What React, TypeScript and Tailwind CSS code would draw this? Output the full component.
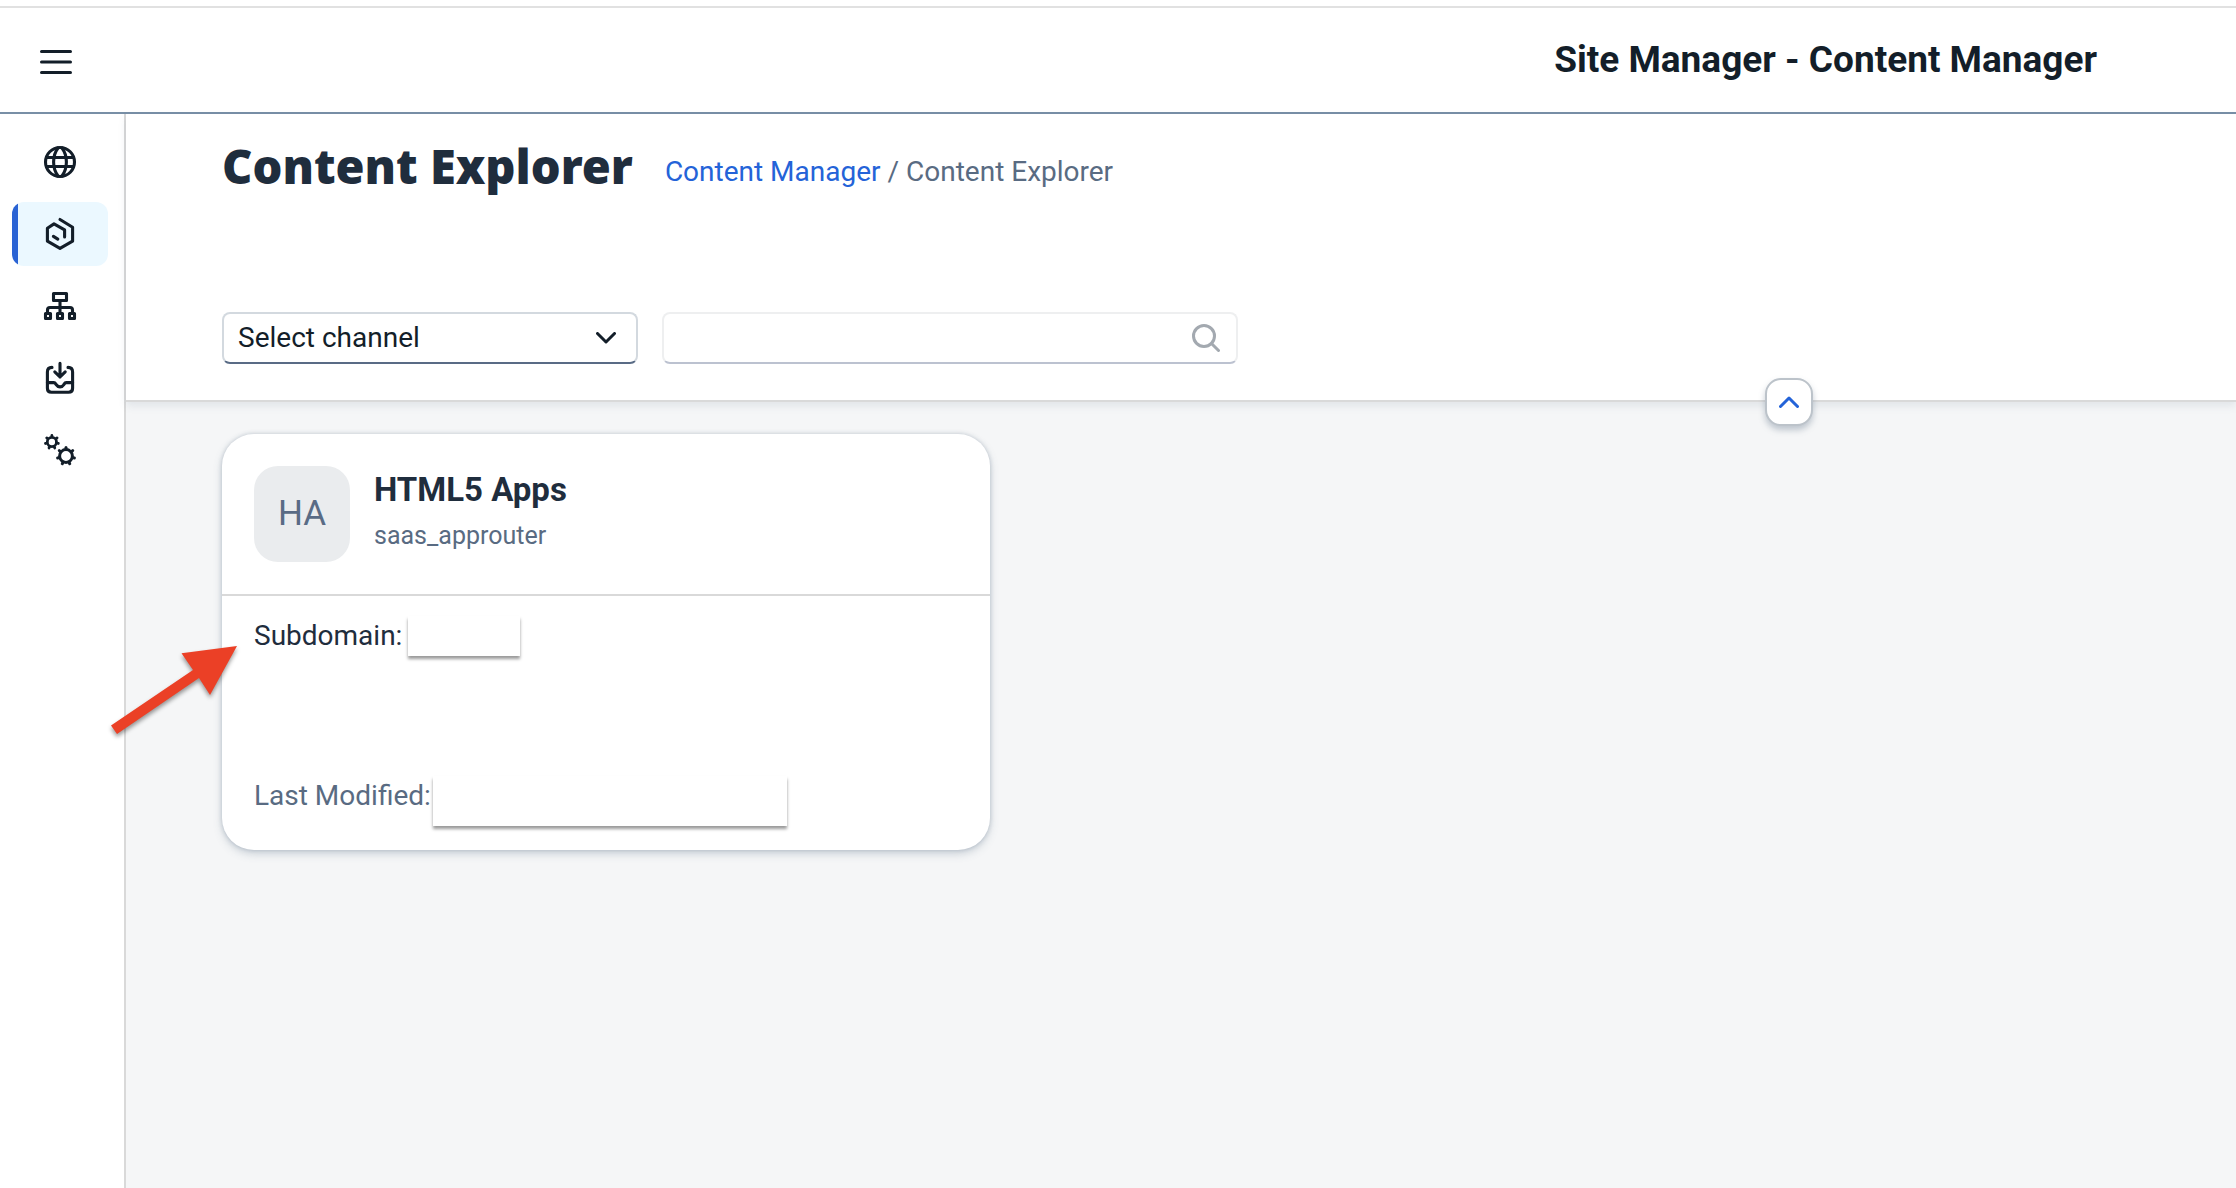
import type { ReactNode } from "react";

const teeth = [0, 1, 2, 3, 4, 5, 6];

function Gear({ cx, cy, ring, tip, width }: { cx: number; cy: number; ring: number; tip: number; width: number }) {
  return (
    <g transform={`translate(${cx} ${cy})`}>
      <circle r={ring} strokeWidth={width} />
      {teeth.map((t) => (
        <path key={t} d={`M0 ${-ring - 1}V${-tip}`} strokeWidth={width} transform={`rotate(${(t * 360) / 7})`} />
      ))}
    </g>
  );
}

function Icon({ children }: { children: ReactNode }) {
  return (
    <svg
      viewBox="0 0 32 32"
      className="size-8 overflow-visible"
      fill="none"
      stroke="currentColor"
      strokeWidth="3.1"
      strokeLinecap="round"
      strokeLinejoin="round"
      aria-hidden="true"
    >
      {children}
    </svg>
  );
}

const navItems: { label: string; active?: boolean; icon: ReactNode }[] = [
  {
    label: "Site Directory",
    icon: (
      <>
        <circle cx="16" cy="16" r="14.5" />
        <path d="M2.5 11.5h27M2.5 20.5h27" />
        <path d="M14 2C11 6 9.6 10.5 9.6 16S11 26 14 30M18 2c3 4 4.4 8.5 4.4 14S21 26 18 30" />
      </>
    ),
  },
  {
    label: "Content Manager",
    active: true,
    icon: (
      <>
        <path d="M16 1.5l12.600 7.700v14L16 30.400 3.400 23.200V10.200L10 5.900l10.600 6V19" />
        <path d="M9.400 18.400l4.400 2.700" />
      </>
    ),
  },
  {
    label: "Channel Manager",
    icon: (
      <>
        <rect x="9.500" y="3.500" width="13" height="7" />
        <path d="M16 11v11M3.500 22v-2q0-2.500 2.500-2.500h20q2.500 0 2.500 2.500v2" />
        <rect x="1.500" y="23.500" width="5" height="5" />
        <rect x="13.500" y="23.500" width="5" height="5" />
        <rect x="25.500" y="23.500" width="5" height="5" />
      </>
    ),
  },
  {
    label: "Transport Manager",
    icon: (
      <>
        <path d="M8 5.400q-4.600 0-4.600 4.600v16.300q0 4 4 4h17.200q4 0 4-4V10q0-4.600-4.600-4.600" />
        <path d="M16 1.400V15M10.800 9.800L16 15l5.200-5.200" />
        <path d="M3.400 20.600h6.400c1.400 0 1.700 1 2.400 2.100 1.800 2.900 5.800 2.900 7.600 0 .7-1.100 1-2.100 2.400-2.100h6.400" />
      </>
    ),
  },
  {
    label: "Settings",
    icon: (
      <>
        <Gear cx={7.9} cy={8} ring={4.6} tip={6.600} width={2.8} />
        <Gear cx={22} cy={22} ring={6.4} tip={8.6} width={3} />
      </>
    ),
  },
];

export default function App() {
  return (
    <div className="flex min-h-screen flex-col bg-white pt-1.5 font-[Roboto,sans-serif] text-[28px] leading-10 text-[#131e29]">
      <header className="flex h-27 items-center border-y-2 border-t-[#e1e1e1] border-b-[#788fa6] pr-[139px] pl-10">
        <button type="button" aria-label="Menu" className="mt-1">
          <svg viewBox="0 0 32 24" className="h-6 w-8" stroke="currentColor" strokeWidth="3" strokeLinecap="round" aria-hidden="true">
            <path d="M1.500 1.500h29M1.500 12h29M1.500 22.500h29" />
          </svg>
        </button>
        <div className="ml-auto text-[37px] font-bold">Site Manager - Content Manager</div>
      </header>

      <div className="flex grow">
        <nav aria-label="Main" className="flex shrink-0 flex-col gap-2 border-r-2 border-[#d9d9d9] pt-4 pr-4 pl-3">
          {navItems.map((item) => (
            <button
              key={item.label}
              type="button"
              aria-label={item.label}
              aria-current={item.active ? "page" : undefined}
              className={
                "relative flex h-16 w-24 items-center justify-center overflow-hidden rounded-xl " +
                (item.active ? "bg-[#ebf8ff]" : "")
              }
            >
              {item.active && <span className="absolute inset-y-0 left-0 w-1.5 bg-[#2a63d4]" />}
              <Icon>{item.icon}</Icon>
            </button>
          ))}
        </nav>

        <main className="grow bg-[#f5f6f7]">
          <section className="relative border-b-2 border-[#d9d9d9] bg-white px-24 pt-6 pb-9 shadow-[0_4px_8px_rgba(85,107,130,0.12)]">
            <div className="flex items-start gap-8">
              <h1 className="font-['Noto_Sans',sans-serif] text-[47px] leading-14 font-black text-[#1f2d3d]">Content Explorer</h1>
              <nav aria-label="Breadcrumb" className="pt-3.5 text-[#596b82]">
                <a href="#content-manager" className="text-[#2463d8]">Content Manager</a>
                {" / "}
                <span>Content Explorer</span>
              </nav>
            </div>

            <div className="mt-[118px] flex gap-6">
              <div className="relative">
                <select
                  aria-label="Select channel"
                  className="block h-13 w-[416px] appearance-none rounded-lg border-2 border-[#d3d9df] border-b-[#596b85] bg-white px-3.5"
                >
                  <option>Select channel</option>
                </select>
                <svg viewBox="0 0 20 12" className="pointer-events-none absolute top-5 right-5.5 h-3 w-5" fill="none" stroke="currentColor" strokeWidth="3" strokeLinecap="round" strokeLinejoin="round" aria-hidden="true">
                  <path d="M1.500 1.500L10 10l8.500-8.500" />
                </svg>
              </div>
              <div className="relative">
                <input
                  type="text"
                  aria-label="Search"
                  className="block h-13 w-144 rounded-lg border-2 border-[#eeeff0] border-b-[#bcc2d0] bg-white pr-16 pl-3.5"
                />
                <svg viewBox="0 0 28 28" className="pointer-events-none absolute top-3 right-4.5 size-7 text-[#a3a9b0]" fill="none" stroke="currentColor" strokeWidth="3" strokeLinecap="round" aria-hidden="true">
                  <circle cx="12" cy="12" r="10.500" />
                  <path d="M19.500 19.500l7 7" />
                </svg>
              </div>
            </div>

            <button
              type="button"
              aria-label="Collapse header"
              className="absolute right-[423px] -bottom-6.5 flex size-12 items-center justify-center rounded-2xl border-2 border-[#bcc3ca] bg-white text-[#2463d8] shadow-[0_4px_6px_rgba(85,107,130,0.35)]"
            >
              <svg viewBox="0 0 20 12" className="h-3 w-5" fill="none" stroke="currentColor" strokeWidth="3" strokeLinecap="round" strokeLinejoin="round" aria-hidden="true">
                <path d="M1.500 10.500L10 2l8.500 8.500" />
              </svg>
            </button>
          </section>

          <div className="px-24 py-8">
            <article className="relative w-192 rounded-4xl bg-white shadow-[0_0_4px_rgba(85,107,130,0.3),0_4px_8px_rgba(85,107,130,0.25)]">
              <div className="flex gap-6 border-b-2 border-[#d9d9d9] p-8">
                <div className="flex size-24 items-center justify-center rounded-3xl bg-[#eaecee] text-[35px] text-[#596b85]">HA</div>
                <div>
                  <h2 className="text-[33px] leading-12 font-bold text-[#1f2d3d]">HTML5 Apps</h2>
                  <p className="text-[25px] leading-11 text-[#596b82]">saas_approuter</p>
                </div>
              </div>
              <div className="px-8 pt-5 pb-6">
                <div className="flex gap-1.5 text-[#1f2d3d]">
                  <span>Subdomain:</span>
                  <span className="h-10 w-28 bg-white shadow-[0_3px_3px_rgba(0,0,0,0.4)]" />
                </div>
                <div className="mt-30 flex gap-0.5 text-[#596b82]">
                  <span>Last Modified:</span>
                  <span className="h-[50px] w-[354px] bg-white shadow-[0_3px_3px_rgba(0,0,0,0.4)]" />
                </div>
              </div>
              <svg viewBox="0 0 126 88" className="absolute top-53 -left-[111px] h-22 w-[126px] overflow-visible drop-shadow-[0_3px_2px_rgba(0,0,0,0.4)]" aria-hidden="true">
                <path d="M126 0L99 49 88 32 6 88 0 79.500 82 24 70.500 7.300Z" fill="#eb4026" />
              </svg>
            </article>
          </div>
        </main>
      </div>
    </div>
  );
}
